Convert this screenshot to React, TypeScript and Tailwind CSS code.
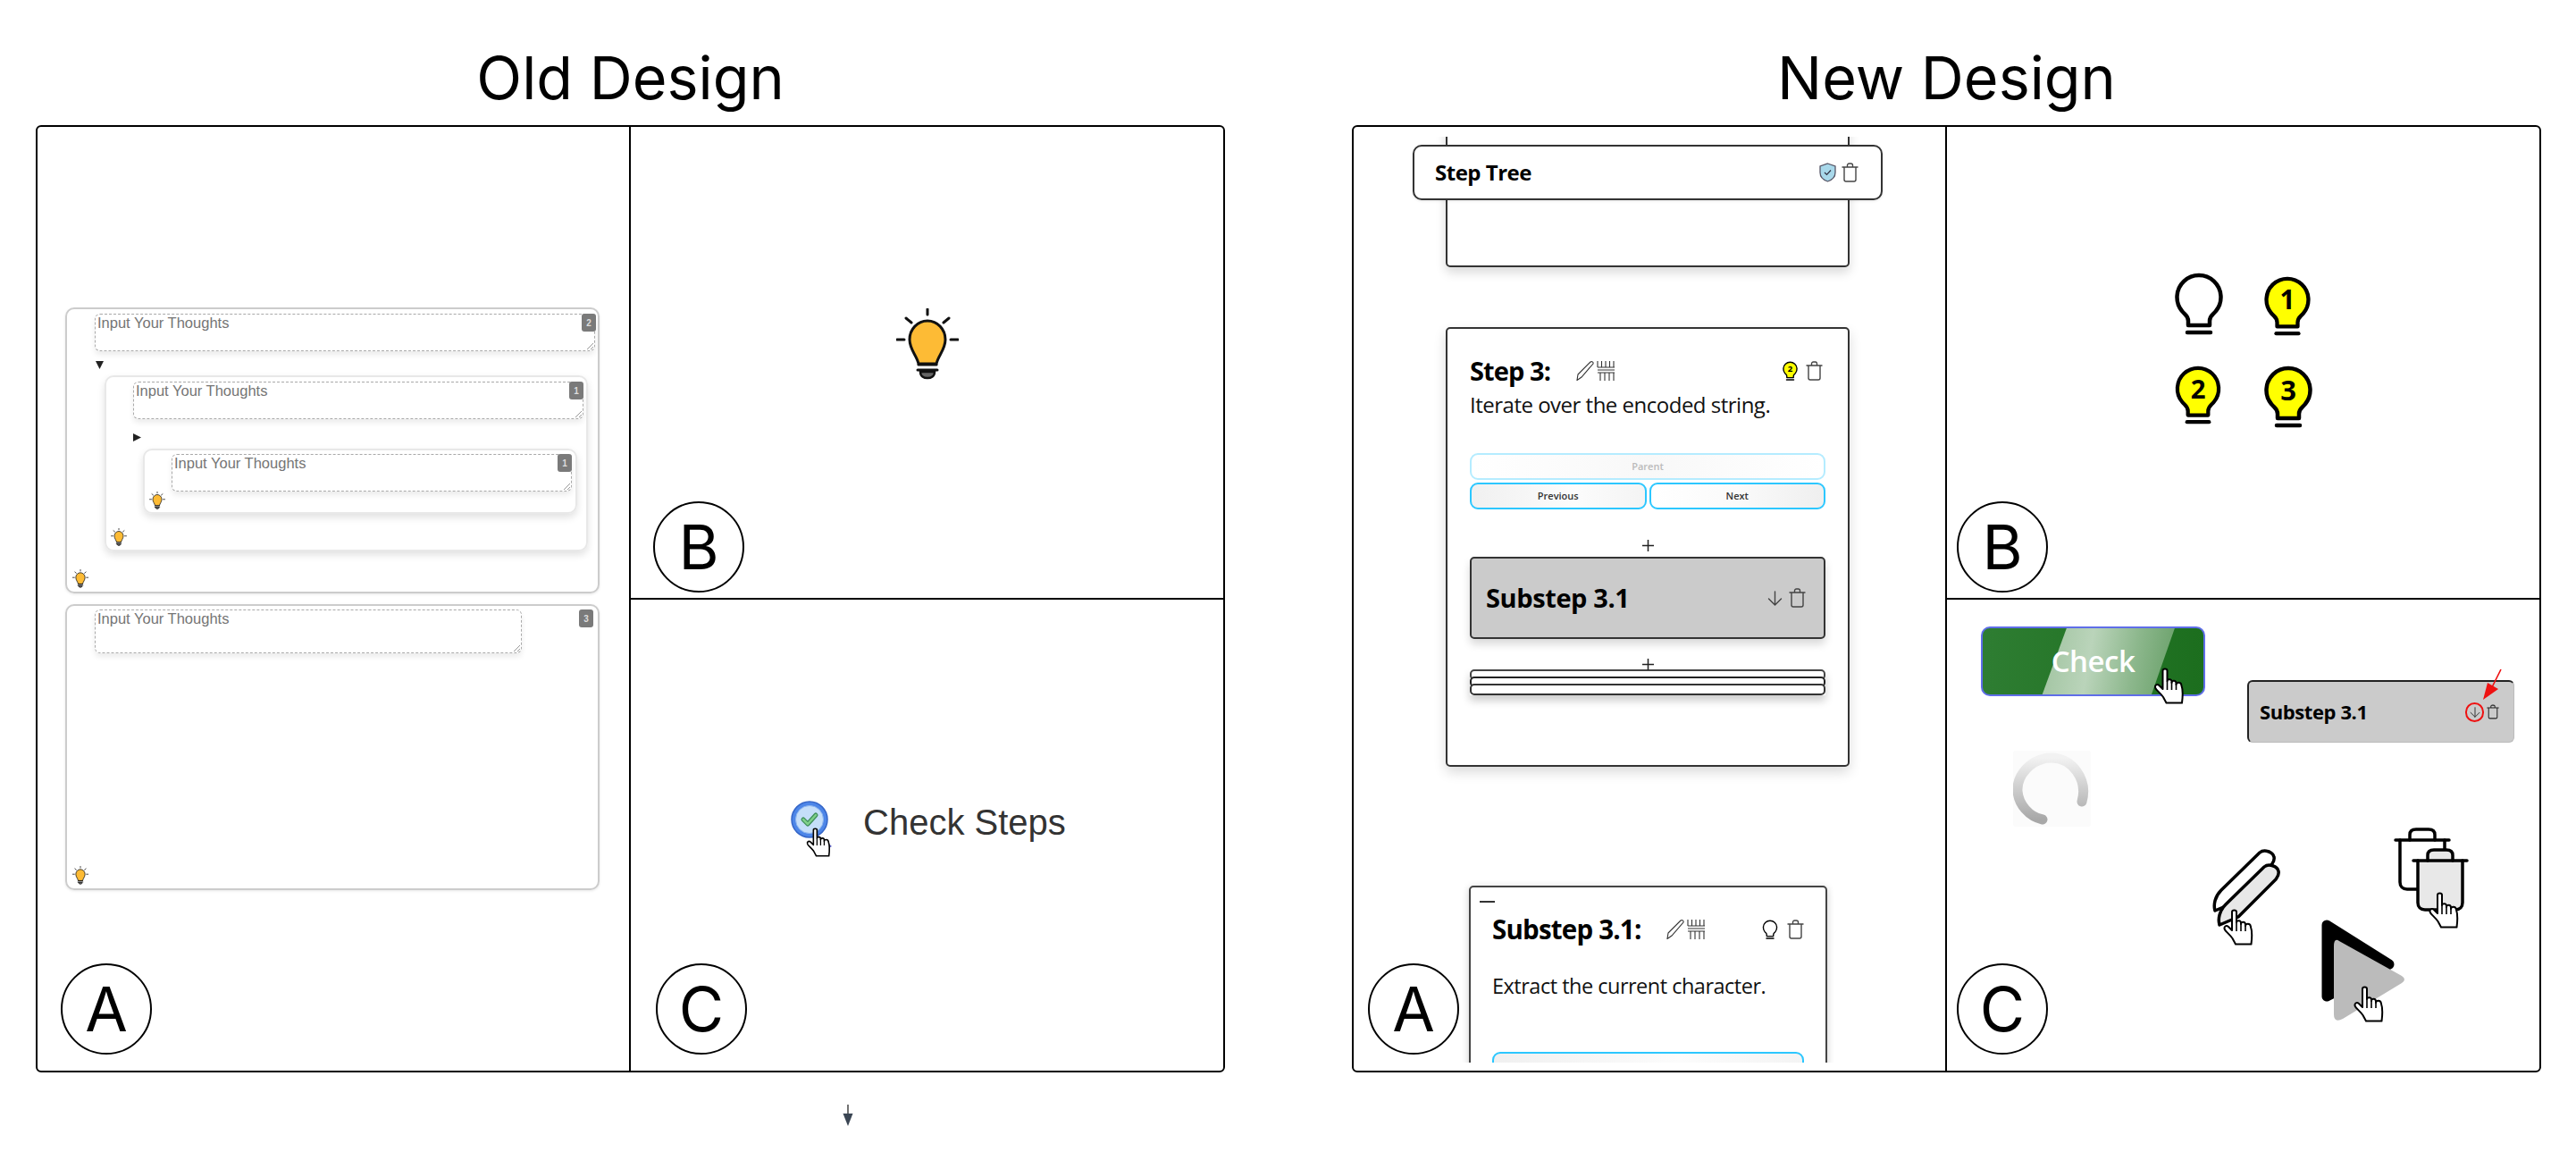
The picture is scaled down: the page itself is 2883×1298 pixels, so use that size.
import React from "react";

const seg = "font-['Open_Sans','Noto_Sans',sans-serif]";

function Hand({ w = 34, h = 41 }: { w?: number; h?: number }) {
  return (
    <svg width={w} height={h} viewBox="0 0 34 41" fill="none">
      <path
        d="M10 24V3.5C10 .8 15 .8 15 3.500V15C15 12.500 20 12.500 20 15.500V17C20 14 25 14 25 17.500V19C25 16 30.500 16 30.800 19.500C32.500 24 33 28 31.500 39.500H14L10.500 33C7 28 3 25.500 1.800 23C.6 20 3.500 17.800 6 20Z"
        fill="#fff"
        stroke="#000"
        strokeWidth="2"
        strokeLinejoin="round"
      />
      <path d="M15 15V25M20 16V25M25 18V25" stroke="#000" strokeWidth="1.600" />
    </svg>
  );
}

function OrangeBulb({ w, h }: { w: number; h: number }) {
  return (
    <svg width={w} height={h} viewBox="43 25 70 80" fill="none" strokeLinecap="round">
      <path d="M78 26V32M44 60H52M104 60H112M54 36L60 41M102 36L96 41" stroke="#111" strokeWidth="3" />
      <path d="M68 87C66 78 58 71 58 60A20 21 0 0 1 98 60C98 71 90 78 88 87Z" fill="#fdbb35" stroke="#111" strokeWidth="3" />
      <path d="M70 96H86C86 101 82 103 78 103C74 103 70 101 70 96Z" fill="#666" stroke="#111" strokeWidth="2.500" />
      <path d="M68 88H88M67 94H89" stroke="#111" strokeWidth="3" />
    </svg>
  );
}

function Grip() {
  return (
    <svg width="10" height="10" viewBox="0 0 10 10" className="absolute right-0 bottom-0" fill="none">
      <path d="M2 9L9 2M6 9L9 6" stroke="#999" strokeWidth="1" />
    </svg>
  );
}

function Thought({ className }: { className: string }) {
  return (
    <div className={`relative rounded-[6px] border border-dashed border-[#aaa] bg-white shadow-[0_4px_6px_rgba(0,0,0,0.08)] ${className}`}>
      <div className="pl-[2px] font-['Liberation_Sans',sans-serif] text-[16.500px] leading-[19px] text-[#757575]">Input Your Thoughts</div>
      <Grip />
    </div>
  );
}

function Badge({ n }: { n: number }) {
  return (
    <div className="absolute top-0 right-0 flex h-[20px] w-[16px] items-center justify-center rounded-[3px] bg-[#7a7a7a] font-['Liberation_Sans',sans-serif] text-[10px] font-bold text-[#ddd]">
      {n}
    </div>
  );
}

function OldA() {
  return (
    <div className="flex h-full flex-col gap-[12px] pt-[202px] pr-[33px] pl-[31px]">
      <div className="flex flex-col rounded-[10px] border-2 border-[#ccc] pt-[5px] pb-[4px] shadow-[0_1px_3px_rgba(0,0,0,0.1)]">
        <div className="relative mr-[3px] ml-[31px]">
          <Thought className="h-[42px]" />
          <div className="absolute top-0 right-[-1px]"><Badge n={2} /></div>
        </div>
        <svg width="9" height="9" viewBox="0 0 9 9" className="mt-[11px] ml-[32px]"><path d="M0 0H9L4.500 9Z" fill="#222" /></svg>
        <div className="mt-[7px] mr-[11px] ml-[42px] flex flex-col rounded-[10px] border-2 border-[#e8e8e8] pt-[5px] shadow-[0_4px_8px_rgba(0,0,0,0.12)]">
          <div className="relative mr-[3px] ml-[30px]">
            <Thought className="h-[42px]" />
            <Badge n={1} />
          </div>
          <svg width="9" height="9" viewBox="0 0 9 9" className="mt-[16px] ml-[30px]"><path d="M0 0L9 4.500L0 9Z" fill="#222" /></svg>
          <div className="mt-[8px] mr-[10px] ml-[41px] flex flex-col rounded-[10px] border-2 border-[#e8e8e8] pt-[4px] pb-[3px] shadow-[0_4px_8px_rgba(0,0,0,0.12)]">
            <div className="relative mr-[4px] ml-[30px]">
              <Thought className="h-[42px]" />
              <Badge n={1} />
            </div>
            <div className="ml-[5px]"><OrangeBulb w={18} h={20} /></div>
          </div>
          <div className="mt-[16px] mb-[4px] ml-[5px]"><OrangeBulb w={18} h={20} /></div>
        </div>
        <div className="mt-[20px] ml-[6px]"><OrangeBulb w={18} h={21} /></div>
      </div>
      <div className="flex h-[320px] flex-col rounded-[10px] border-2 border-[#ccc] pt-[4px] pb-[4px] shadow-[0_1px_3px_rgba(0,0,0,0.1)]">
        <div className="relative">
          <Thought className="ml-[31px] h-[49px] w-[478px]" />
          <div className="absolute top-0 right-[5px]"><Badge n={3} /></div>
        </div>
        <div className="mt-auto ml-[6px]"><OrangeBulb w={18} h={21} /></div>
      </div>
    </div>
  );
}

function CheckIcon() {
  return (
    <div className="relative h-[64px] w-[49px]">
      <svg width="49" height="64" viewBox="0 0 49 64" fill="none">
        <path d="M32 40L47 52L40 56L26 44Z" fill="#5a5fc8" />
        <path d="M36 44L44 51L40 54L32 47Z" fill="#a8776a" />
        <circle cx="22" cy="22" r="20" fill="#4d86e8" stroke="#3566c8" strokeWidth="1.500" />
        <circle cx="22" cy="22" r="15.500" fill="#c5def9" stroke="#8db5ee" />
        <path d="M15 22L20 27L29 17" stroke="#3f8f5a" strokeWidth="5" strokeLinecap="round" strokeLinejoin="round" />
        <path d="M15 22L20 27L29 17" stroke="#7fd08a" strokeWidth="2.500" strokeLinecap="round" strokeLinejoin="round" />
      </svg>
      <div className="absolute top-[31px] left-[18px]"><Hand w={28} h={33} /></div>
    </div>
  );
}

function Circle({ letter, className }: { letter: string; className: string }) {
  return (
    <div className={`absolute flex h-[102px] w-[102px] items-center justify-center rounded-full border-2 border-black bg-white font-['Inter',sans-serif] text-[69px] leading-none text-black ${className}`}>
      {letter}
    </div>
  );
}

function Trash({ w = 19, h = 22, color = "#444" }: { w?: number; h?: number; color?: string }) {
  return (
    <svg width={w} height={h} viewBox="0 0 19 22" fill="none" stroke={color} strokeWidth="1.400" strokeLinecap="round">
      <path d="M1 5H18M3 5V19C3 20.500 4 21 5 21H14C15 21 16 20.500 16 19V5M6.500 5V3C6.500 1.500 7.500 1 8.500 1H10.500C11.500 1 12.500 1.500 12.500 3V5" />
    </svg>
  );
}

function PencilGrid({ w = 47, h = 22 }: { w?: number; h?: number }) {
  return (
    <svg width={w} height={h} viewBox="0 0 47 22" fill="none" stroke="#333" strokeWidth="1.100">
      <path d="M3 15L17 1C18.500 0 20.500 1 20 3L7 18L2 21.500Z" />
      <path d="M25 0V7M29.500 0V7M34 0V7M38.500 0V7M43 0V7M25 7H44M25 10H44" />
      <path d="M25 13H44M28 13V22M33 13V22M38 13V22M43 13V22" />
    </svg>
  );
}

function Bulb({ fill = "none", label, w = 54, h = 71 }: { fill?: string; label?: string; w?: number; h?: number }) {
  return (
    <svg width={w} height={h} viewBox="0 0 54 71" fill="none">
      <path d="M15 60V55C15 49 11 48 8 44A24.500 24.500 0 1 1 46 44C43 48 39 49 39 55V60Z" fill={fill} stroke="#000" strokeWidth="4.500" strokeLinejoin="round" />
      <path d="M14 68H40" stroke="#000" strokeWidth="4.500" strokeLinecap="round" />
      {label && (
        <text x="27" y="40" textAnchor="middle" fontFamily="Open Sans, sans-serif" fontWeight="700" fontSize="31" fill="#000">
          {label}
        </text>
      )}
    </svg>
  );
}

function Shield() {
  return (
    <svg width="19" height="22" viewBox="0 0 19 22" fill="none">
      <path d="M9.500 1L18 4V11C18 16 14 19.500 9.500 21C5 19.500 1 16 1 11V4Z" fill="#a8d8ea" stroke="#556" strokeWidth="1.300" />
      <path d="M6 11L8.500 13.500L13 8.500" stroke="#334" strokeWidth="1.200" />
    </svg>
  );
}

function DownArrow({ size = 17, color = "#444" }: { size?: number; color?: string }) {
  return (
    <svg width={size} height={size} viewBox="0 0 17 17" fill="none" stroke={color} strokeWidth="1.400" strokeLinecap="round">
      <path d="M8.500 1V16M1.500 9L8.500 16L15.500 9" />
    </svg>
  );
}

function Plus() {
  return (
    <svg width="13" height="13" viewBox="0 0 13 13" fill="none" stroke="#222" strokeWidth="1.500">
      <path d="M6.500 0V13M0 6.500H13" />
    </svg>
  );
}

const btn = "flex h-[30px] items-center justify-center rounded-[9px] border-2 font-['Open_Sans',sans-serif] text-[11px] font-semibold";

function NewA() {
  return (
    <div className="relative h-full pt-[11px]">
      <div className="relative h-[1036px] overflow-hidden">
        <div className={`flex flex-col ${seg} text-black`}>
          <div className="mr-[107px] ml-[103px] -mt-[40px] h-[186px] rounded-[5px] border-2 border-[#333] bg-white shadow-[0_6px_12px_rgba(0,0,0,0.15)]" />
          <div className="mt-[67px] mr-[107px] ml-[103px] flex h-[492px] flex-col rounded-[5px] border-2 border-[#333] bg-white px-[25px] pt-[33px] shadow-[0_6px_14px_rgba(0,0,0,0.15)]">
            <div className="flex h-[28px] items-center">
              <div className="w-[118px] text-[29px] leading-[28px] font-bold tracking-[-0.9px]">Step 3:</div>
              <PencilGrid />
              <div className="mr-[3px] ml-auto flex items-center gap-[9px]">
                <Bulb fill="#ffff00" label="2" w={17} h={22} />
                <Trash />
              </div>
            </div>
            <div className="mt-[8px] text-[24px] leading-[32px] tracking-[-0.5px] whitespace-nowrap text-[#111]">Iterate over the encoded string.</div>
            <div className={`${btn} mt-[38px] border-[#b5ecff] bg-[linear-gradient(90deg,#fff,#f8f8f8_50%,#fff)] text-[11px] font-normal text-[#bbb]`}>Parent</div>
            <div className="mt-[3px] flex gap-[3px]">
              <div className={`${btn} flex-1 border-[#2cc7ff] bg-[linear-gradient(90deg,#f0f0f0,#fcfcfc_60%,#f4f4f4)] text-[#333]`}>Previous</div>
              <div className={`${btn} flex-1 border-[#2cc7ff] bg-[linear-gradient(90deg,#fff,#fafafa_50%,#efefef)] text-[#333]`}>Next</div>
            </div>
            <div className="mt-[34px] flex justify-center"><Plus /></div>
            <div className="mt-[6px] flex h-[92px] items-center rounded-[5px] border-2 border-[#333] bg-[#cbcbcb] pr-[20px] pl-[16px] shadow-[0_6px_10px_rgba(0,0,0,0.15)]">
              <div className="text-[29px] font-bold tracking-[-0.4px]">Substep 3.1</div>
              <div className="ml-auto flex items-center gap-[7px]">
                <DownArrow />
                <Trash />
              </div>
            </div>
            <div className="relative z-10 mt-[22px] -mb-[1px] flex justify-center"><Plus /></div>
            <div className="relative shadow-[0_6px_10px_rgba(0,0,0,0.2)]">
              <div className="h-[12px] rounded-[5px] border-2 border-[#444] bg-white" />
              <div className="-mt-[4px] h-[12px] rounded-[5px] border-2 border-[#222] bg-white" />
              <div className="-mt-[4px] h-[13px] rounded-[5px] border-2 border-[#333] bg-white" />
            </div>
          </div>
          <div className="mt-[133px] mr-[132px] ml-[129px] flex h-[300px] flex-col rounded-[5px] border-2 border-[#444] bg-white px-[24px] shadow-[0_2px_8px_rgba(0,0,0,0.2)]">
            <div className="mt-[15px] -ml-[14px] h-[2px] w-[17px] bg-[#333]" />
            <div className="mt-[16px] flex h-[28px] items-center">
              <div className="w-[194px] text-[29.500px] leading-[28px] font-bold tracking-[-0.8px]">Substep 3.1:</div>
              <PencilGrid />
              <div className="ml-auto flex items-center gap-[10px]">
                <Bulb w={18} h={22} />
                <Trash />
              </div>
            </div>
            <div className="mt-[35px] text-[23.500px] leading-[28px] tracking-[-0.5px] whitespace-nowrap text-[#111]">Extract the current character.</div>
            <div className="mt-[60px] h-[40px] rounded-[9px] border-2 border-[#2cc7ff] bg-[linear-gradient(90deg,#f0f0f0,#fcfcfc_60%,#f4f4f4)]" />
          </div>
        </div>
        <div className="absolute top-[9px] right-[70px] left-[66px] flex h-[62px] items-center rounded-[10px] border-2 border-[#333] bg-white pr-[25px] pl-[23px] shadow-[0_1px_3px_rgba(0,0,0,0.1)]">
          <div className="text-[24px] font-bold tracking-[-0.5px] font-['Open_Sans',sans-serif] text-black">Step Tree</div>
          <div className="ml-auto flex items-center gap-[6px]">
            <Shield />
            <Trash />
          </div>
        </div>
      </div>
    </div>
  );
}

function NewB() {
  return (
    <div className="grid h-full grid-cols-[100px_54px] content-start gap-y-[32px] pt-[162px] pl-[255px]">
      <Bulb w={54} h={71} />
      <div className="mt-[4px]"><Bulb fill="#ffff00" label="1" w={52} h={68} /></div>
      <Bulb fill="#ffff00" label="2" w={52} h={67} />
      <Bulb fill="#ffff00" label="3" w={54} h={71} />
    </div>
  );
}

function TrashBig({ fill = "#fff" }: { fill?: string }) {
  return (
    <svg width="64" height="71" viewBox="0 0 64 71" fill="none" stroke="#000" strokeWidth="3.500" strokeLinecap="round">
      <path d="M7 14V61C7 66 10 69 15 69H49C54 69 57 66 57 61V14" fill={fill} />
      <path d="M18 14V8C18 3 21 2 25 2H39C43 2 46 3 46 8V14" fill={fill} />
      <path d="M2 14H62" />
    </svg>
  );
}

function PencilBig({ fill = "#fff" }: { fill?: string }) {
  return (
    <svg width="71" height="71" viewBox="0 0 71 71" fill="none" stroke="#000" strokeWidth="3.500" strokeLinejoin="round">
      <path d="M10 46L53 4C58 0 68 3 69 9C70 13 68 15 66 18L24 60L3 69C1 62 3 53 10 46Z" fill={fill} />
    </svg>
  );
}

function NewC() {
  return (
    <div className="relative h-full">
      <div className="absolute top-[30px] left-[38px] flex h-[78px] w-[251px] items-center justify-center overflow-hidden rounded-[10px] border-2 border-[#5f6ee8] bg-[linear-gradient(90deg,#2e7d32,#1c6e1e)]">
        <div className="absolute inset-0 bg-[linear-gradient(100deg,#7fae7f,#bad4ba_48%,#8cb78c_68%,#4f8f4f)] [clip-path:polygon(38%_0,87%_0,76.500%_100%,27%_100%)]" />
        <div className="relative font-['Open_Sans',sans-serif] text-[33px] font-semibold tracking-[-0.5px] text-white">Check</div>
      </div>
      <div className="absolute top-[76px] left-[231px]"><Hand w={35} h={41} /></div>

      <div className="absolute top-[90px] left-[336px] flex h-[70px] w-[299px] items-center rounded-[6px] border border-t-2 border-l-2 border-[#bbb] border-t-[#222] border-l-[#222] bg-[#cbcbcb] pr-[16px] pl-[12px]">
        <div className="font-['Open_Sans',sans-serif] text-[22px] font-bold tracking-[-0.4px] text-black">Substep 3.1</div>
        <div className="ml-auto flex items-center gap-[3px]">
          <div className="flex h-[22px] w-[21px] items-center justify-center rounded-full border-2 border-[#ee1111]"><DownArrow size={12} color="#333" /></div>
          <Trash w={14} h={17} color="#222" />
        </div>
      </div>
      <svg width="30" height="40" viewBox="0 0 30 40" fill="none" className="absolute top-[76px] left-[597px]">
        <path d="M23 2L13 22" stroke="#ee1111" strokeWidth="1.600" />
        <path d="M3 36L8 17L20 24Z" fill="#ee1111" />
      </svg>

      <div className="absolute top-[169px] left-[74px] flex h-[85px] w-[87px] items-center justify-center rounded-[3px] bg-[#fbfbfb]">
        <svg width="87" height="85" viewBox="0 0 87 85" fill="none">
          <defs>
            <linearGradient id="spin" x1="0" y1="0" x2="0" y2="1">
              <stop offset="0" stopColor="#f2f2f2" />
              <stop offset="1" stopColor="#a8a8a8" />
            </linearGradient>
          </defs>
          <path d="M77 57C84 32 66 8 43 8C20 8 4 28 5 45C6 60 18 74 33 77" stroke="url(#spin)" strokeWidth="11" strokeLinecap="round" />
        </svg>
      </div>

      <div className="absolute top-[255px] left-[500px]"><TrashBig /></div>
      <div className="absolute top-[278px] left-[520px]"><TrashBig fill="#e8e8e8" /></div>
      <div className="absolute top-[327px] left-[539px]"><Hand /></div>

      <div className="absolute top-[279px] left-[297px]"><PencilBig /></div>
      <div className="absolute top-[295px] left-[302px]"><PencilBig fill="#e8e8e8" /></div>
      <div className="absolute top-[346px] left-[309px]"><Hand /></div>

      <svg width="95" height="114" viewBox="0 0 95 114" fill="none" className="absolute top-[358px] left-[419px]">
        <path d="M6 6L76 50L6 86Z" fill="#000" stroke="#000" strokeWidth="11" strokeLinejoin="round" />
        <path d="M20 24L90 63Q96 67 90 71L24 111Q14 116 14 106V30Q14 20 20 24Z" fill="#bbb" />
      </svg>
      <div className="absolute top-[432px] left-[455px]"><Hand /></div>
    </div>
  );
}

function Panel({ a, b, c, letters }: { a: React.ReactNode; b: React.ReactNode; c: React.ReactNode; letters: string[] }) {
  return (
    <div className="grid h-[1060px] w-[1331px] grid-cols-[664px_1fr] grid-rows-[529px_1fr] overflow-hidden rounded-[6px] border-2 border-black">
      <div className="relative row-span-2 border-r-2 border-black">
        {a}
        <Circle letter="A" className={letters[0]} />
      </div>
      <div className="relative border-b-2 border-black">
        {b}
        <Circle letter="B" className={letters[1]} />
      </div>
      <div className="relative">
        {c}
        <Circle letter="C" className={letters[2]} />
      </div>
    </div>
  );
}

export default function App() {
  return (
    <div className="relative h-[1298px] w-[2883px] overflow-hidden bg-white">
      <div className="flex gap-[142px] pl-[40px]">
        <div className="flex w-[1331px] flex-col">
          <div className="flex h-[140px] items-end justify-center pb-[14px] font-['Inter',sans-serif] text-[66.500px] leading-[78px] text-black">Old Design</div>
          <Panel
            a={<OldA />}
            b={
              <div className="flex justify-center pt-[203px]">
                <OrangeBulb w={70} h={80} />
              </div>
            }
            c={
              <div className="flex items-start pt-[224px] pl-[178px]">
                <CheckIcon />
                <div className="mt-[-4px] ml-[33px] font-['Liberation_Sans',sans-serif] text-[40px] leading-[58px] text-[#333]">Check Steps</div>
              </div>
            }
            letters={["bottom-[18px] left-[26px]", "bottom-[6px] left-[25px]", "bottom-[18px] left-[28px]"]}
          />
          <div className="mt-[36px] ml-[900px]">
            <svg width="18" height="24" viewBox="0 0 18 24" fill="none">
              <path d="M9 0V12" stroke="#444" strokeWidth="1.500" />
              <path d="M3.500 10H14.500L9 24Z" fill="#3b4654" />
            </svg>
          </div>
        </div>
        <div className="flex w-[1331px] flex-col">
          <div className="flex h-[140px] items-end justify-center pb-[14px] font-['Inter',sans-serif] text-[66.500px] leading-[78px] text-black">New Design</div>
          <Panel
            a={<NewA />}
            b={<NewB />}
            c={<NewC />}
            letters={["bottom-[18px] left-[16px]", "bottom-[6px] left-[11px]", "bottom-[18px] left-[11px]"]}
          />
        </div>
      </div>
    </div>
  );
}
